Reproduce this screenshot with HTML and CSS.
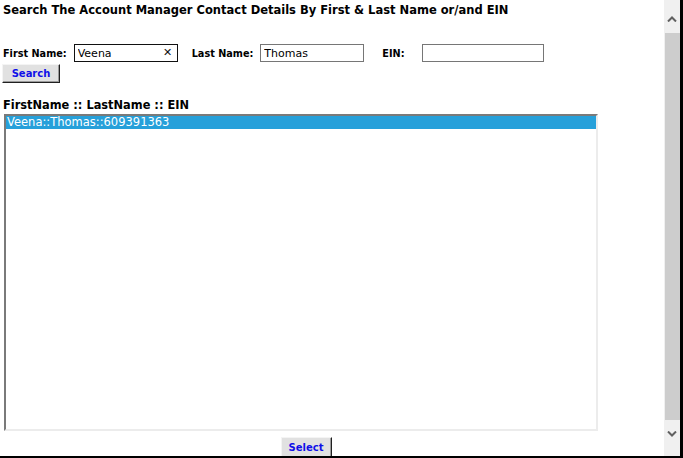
FILE: index.html
```html
<!DOCTYPE html>
<html>
<head>
<meta charset="utf-8">
<link rel="stylesheet" href="styles.css">
</head>
<body>
<div class="window">
  <div class="page">
    <h1 class="title">Search The Account Manager Contact Details By First &amp; Last Name or/and EIN</h1>
    <form class="search">
      <div class="fields">
        <label class="lbl lbl-first">First Name:</label>
        <span class="field field-first focused">
          <input class="inp" type="text" value="Veena">
          <span class="clear">&#x2715;</span>
        </span>
        <label class="lbl lbl-last">Last Name:</label>
        <span class="field field-last"><input class="inp" type="text" value="Thomas"></span>
        <label class="lbl lbl-ein">EIN:</label>
        <span class="field field-ein"><input class="inp" type="text" value=""></span>
      </div>
      <button type="button" class="btn btn-search">Search</button>
    </form>
    <div class="list-head">FirstName :: LastName :: EIN</div>
    <div class="listbox">
      <div class="opt selected">Veena::Thomas::609391363</div>
    </div>
    <div class="actions">
      <button type="button" class="btn btn-select">Select</button>
    </div>
  </div>
  <div class="scrollbar">
    <div class="sb-btn sb-up">
      <svg width="10" height="6" viewBox="0 0 10 6"><path d="M1 5.5 L5 1.5 L9 5.5" fill="none" stroke="#606060" stroke-width="2"/></svg>
    </div>
    <div class="sb-track"><div class="sb-thumb"></div></div>
    <div class="sb-btn sb-down">
      <svg width="10" height="6" viewBox="0 0 10 6"><path d="M1 0.5 L5 4.5 L9 0.5" fill="none" stroke="#606060" stroke-width="2"/></svg>
    </div>
  </div>
</div>
</body>
</html>
```
FILE: styles.css
```css
html, body {
  margin: 0;
  padding: 0;
  background: #fff;
}
body {
  font-family: "DejaVu Sans", Verdana, sans-serif;
  color: #000;
}
.window {
  width: 683px;
  height: 458px;
  box-sizing: border-box;
  border-right: 3px solid #000;
  border-bottom: 2px solid #000;
  display: flex;
  overflow: hidden;
}
.page {
  flex: 1;
  overflow: hidden;
  padding: 3px 0 0 3px;
}
.title {
  font-size: 11.5px;
  font-weight: bold;
  line-height: 14px;
  height: 14px;
  margin: 0;
  white-space: nowrap;
}
.search {
  margin: 27px 0 0 0;
}
.fields {
  display: flex;
  align-items: center;
  height: 18px;
}
.lbl {
  font-size: 9.7px;
  font-weight: bold;
  white-space: nowrap;
}
.lbl-first { margin-right: 7px; }
.lbl-last { margin-left: 14px; margin-right: 7px; }
.lbl-ein { margin-left: 18px; margin-right: 17px; }
.field {
  display: flex;
  align-items: center;
  box-sizing: border-box;
  height: 18px;
  border: 1px solid #767676;
  background: #fff;
}
.field.focused { border-color: #111; }
.field-first { width: 104px; }
.field-last { width: 104px; }
.field-ein { width: 122px; }
.inp {
  flex: 1;
  min-width: 0;
  border: 0;
  outline: 0;
  padding: 0 0 0 3px;
  margin: 0;
  height: 16px;
  font-family: "DejaVu Sans", Verdana, sans-serif;
  font-size: 11px;
  color: #000;
  background: transparent;
}
.clear {
  font-size: 11px;
  font-weight: bold;
  line-height: 16px;
  width: 12px;
  margin-right: 3px;
  text-align: center;
  color: #111;
}
.btn {
  font-family: "DejaVu Sans", Verdana, sans-serif;
  font-size: 10px;
  font-weight: bold;
  color: #1010e8;
  background: #e1e1e1;
  border: 1px solid;
  border-color: #f4f4f4 #202020 #202020 #f4f4f4;
  box-shadow: inset -1px -1px 0 #9a9a9a;
  padding: 0;
  margin: 0;
  display: block;
}
.btn-search {
  width: 58px;
  height: 19px;
  margin: 2px 0 0 -1px;
}
.list-head {
  font-size: 11.4px;
  font-weight: bold;
  line-height: 13px;
  height: 13px;
  margin-top: 16px;
  white-space: nowrap;
}
.listbox {
  box-sizing: border-box;
  width: 594px;
  height: 317px;
  margin: 2px 0 0 1px;
  border: 2px solid;
  border-color: #7a7a7a #ececec #ececec #7a7a7a;
  padding: 0;
  background: #fff;
}
.opt {
  font-size: 11.5px;
  line-height: 13px;
  height: 13px;
  padding-left: 1px;
  white-space: nowrap;
}
.opt.selected {
  background: #26a0da;
  color: #fff;
}
.actions {
  width: 606px;
  display: flex;
  justify-content: center;
  margin-top: 6px;
}
.btn-select {
  width: 51px;
  height: 21px;
}
.scrollbar {
  width: 16px;
  flex: none;
  background: #f0f0f0;
  display: flex;
  flex-direction: column;
}
.sb-btn {
  display: flex;
  align-items: center;
  justify-content: center;
}
.sb-up { height: 33px; padding-top: 4px; box-sizing: border-box; }
.sb-down { height: 36px; padding-bottom: 8px; box-sizing: border-box; }
.sb-track {
  flex: 1;
  display: flex;
  padding-left: 1px;
}
.sb-thumb {
  flex: 1;
  background: #cdcdcd;
}
```
